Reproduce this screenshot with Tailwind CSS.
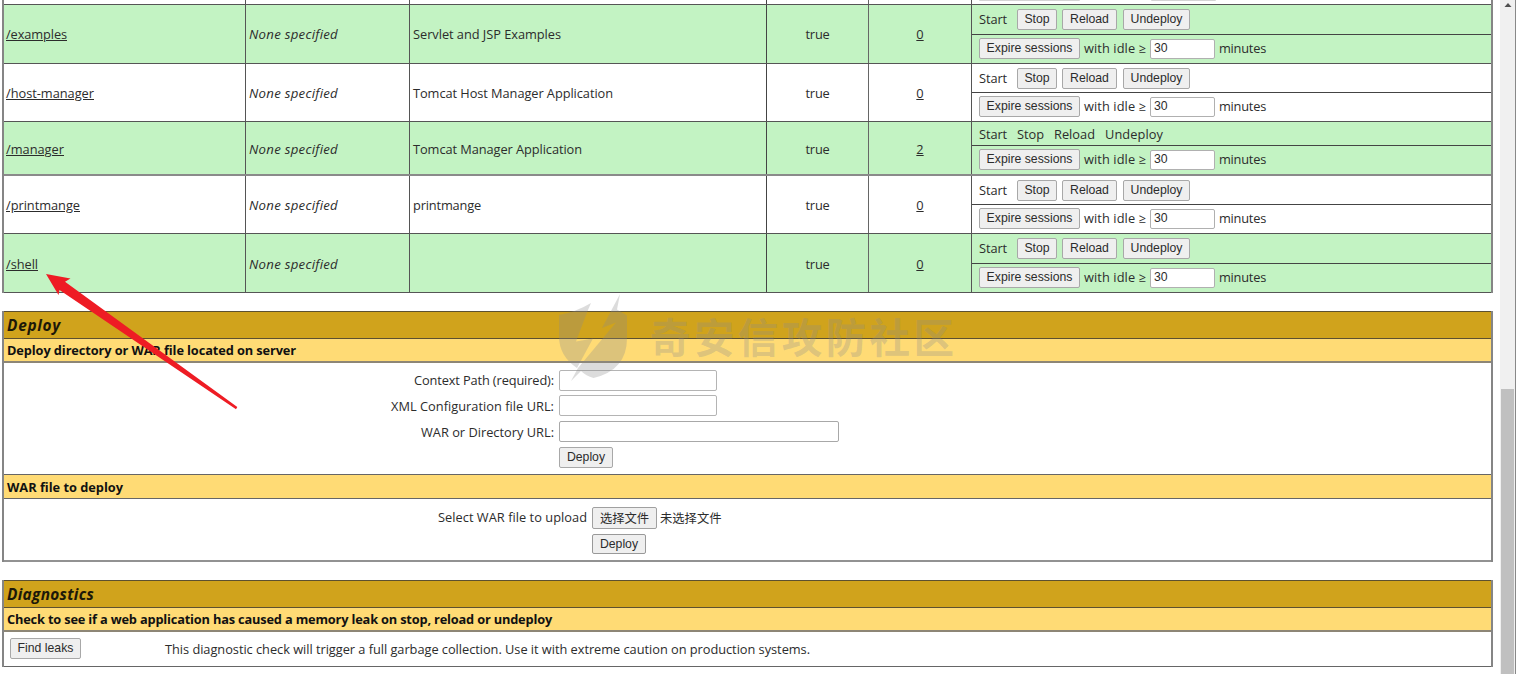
<!DOCTYPE html>
<html lang="en">
<head>
<meta charset="utf-8">
<title>/manager</title>
<script src="https://cdn.jsdelivr.net/npm/@tailwindcss/browser@4"></script>
</head>
<body class="relative h-[674px] w-[1516px] overflow-hidden bg-white font-['Open_Sans','Noto_Sans_CJK_SC',sans-serif] text-[12.8px] leading-[18px] text-[#2c2c2c]">
<div class="flex h-full justify-between">
<main class="w-[1491px] pl-[2px]">

  <!-- Applications -->
  <section id="apps" class="w-[1491px] border-x-2 border-[#858585]">
    <div class="grid h-[5px] grid-cols-[242px_164px_357px_102px_103px_519px] border-b border-[#555]">
      <div class="border-r border-[#555]"></div><div class="border-r border-[#555]"></div><div class="border-r border-[#444]"></div><div class="border-r border-[#666]"></div><div class="border-r border-[#555]"></div>
      <div class="flex gap-[71px] pl-[7px]"><div class="h-[1px] w-[101px] rounded-b-sm bg-[#d4d4d4]"></div><div class="h-[1px] w-[65px] rounded-b-sm bg-[#d4d4d4]"></div></div>
    </div>
  </section>

  <!-- Deploy -->
  <section class="mt-[18px] w-[1491px] border-x-2 border-[#858585]">
    <h2 class="flex h-[28px] items-center border-y border-[#5c5030] bg-[#d0a31c] pt-[2px] pl-[3px] text-[15.4px] font-bold text-[#1c1808] italic"><span data-w="54">Deploy</span></h2>
    <h3 class="flex h-[24px] items-center border-b-2 border-[#8d8676] bg-[#ffdb75] pl-[3px] font-bold text-[#111]"><span data-w="289">Deploy directory or WAR file located on server</span></h3>
    <div class="flex h-[111px] flex-col pt-[4px]">
      <div class="flex h-[26px] items-center"><label class="mr-[5px] flex w-[550px] justify-end"><span data-w="140">Context Path (required):</span></label><div class="h-[21px] w-[158px] rounded-[2px] border border-[#b4b4b4] bg-white"></div></div>
      <div class="flex h-[25px] items-center"><label class="mr-[5px] flex w-[550px] justify-end"><span data-w="163">XML Configuration file URL:</span></label><div class="h-[21px] w-[158px] rounded-[2px] border border-[#b4b4b4] bg-white"></div></div>
      <div class="flex h-[27px] items-center"><label class="mr-[5px] flex w-[550px] justify-end"><span data-w="133">WAR or Directory URL:</span></label><div class="h-[21px] w-[280px] rounded-[2px] border border-[#a8a8a8] bg-white"></div></div>
      <div class="flex h-[25px] items-center pl-[555px]"><button class="flex h-[21px] w-[54px] items-center justify-center rounded-[2px] border border-[#a8a8a8] bg-[#efefef] pb-px font-['Liberation_Sans',sans-serif] text-[12.25px]">Deploy</button></div>
    </div>
    <h3 class="flex h-[25px] items-center border-y border-[#666] bg-[#ffdb75] pt-px pl-[3px] font-bold text-[#111]"><span data-w="116">WAR file to deploy</span></h3>
    <div class="flex h-[63px] flex-col border-b-2 border-[#929292] pt-[6px]">
      <div class="flex h-[26px] items-center pl-[434px]"><span class="pb-[2px]" data-w="149">Select WAR file to upload</span>
        <button class="ml-[5px] flex h-[22px] w-[65px] items-center justify-center rounded-[2px] border border-[#a0a0a0] bg-[#efefef] pb-px font-['Noto_Sans_CJK_SC',sans-serif] text-[12.3px]">选择文件</button>
        <span class="ml-[3px] pb-px font-['Noto_Sans_CJK_SC',sans-serif] text-[12.3px]">未选择文件</span></div>
      <div class="flex h-[26px] items-center pl-[588px]"><button class="flex h-[20px] w-[54px] items-center justify-center rounded-[2px] border border-[#999] bg-[#efefef] font-['Liberation_Sans',sans-serif] text-[12.25px]">Deploy</button></div>
    </div>
  </section>

  <!-- Diagnostics -->
  <section class="mt-[18px] w-[1491px] border-x-2 border-[#858585]">
    <h2 class="flex h-[28px] items-center border-y border-[#5c5030] bg-[#d0a31c] pt-[2px] pl-[3px] text-[15.4px] font-bold text-[#1c1808] italic"><span data-w="87">Diagnostics</span></h2>
    <h3 class="flex h-[24px] items-center border-b-2 border-[#8d8676] bg-[#ffdb75] pl-[3px] font-bold text-[#111]"><span data-w="545">Check to see if a web application has caused a memory leak on stop, reload or undeploy</span></h3>
    <div class="flex h-[35px] items-center border-b border-[#666] pb-px pl-[6px]"><button class="flex h-[21px] w-[71px] items-center justify-center rounded-[2px] border border-[#a8a8a8] bg-[#efefef] pb-px font-['Liberation_Sans',sans-serif] text-[12.25px]">Find leaks</button><span class="ml-[84px]" data-w="645">This diagnostic check will trigger a full garbage collection. Use it with extreme caution on production systems.</span></div>
  </section>
</main>

<!-- Scrollbar -->
<aside class="flex h-full w-[16px] flex-col items-center border-r border-[#888] bg-[#f0f0f0]">
  <svg class="mt-[3px] h-[4px] w-[8px]" viewBox="0 0 8 4"><path d="M0.5 4 L4 0 L7.5 4 Z" fill="#505050"/></svg>
  <div class="mt-[382px] w-[13px] grow bg-[#c0c0c0]"></div>
</aside>
</div>

<!-- Watermark -->
<svg class="pointer-events-none absolute top-[290px] left-[550px] h-[100px] w-[420px]" viewBox="550 290 420 100">
  <g fill="#8b8b8b" fill-opacity=".3">
    <path d="M559 315 Q576 312 591 303 L588 310 L576 341.500 L593 338.500 L577 368 Q559 356 559 336 Z"/>
    <path d="M620 294 L617 309.500 L627 315.500 V338 Q627 370 593.500 378 Q586 376 581 371 L571 381 L578 368 L616 322.500 L602 328 L611 311 Z"/>
    <text x="650" y="353" font-family="Noto Sans CJK SC" font-size="40.500" font-weight="700" textLength="304" lengthAdjust="spacing">奇安信攻防社区</text>
  </g>
</svg>

<!-- Arrow pointing to /shell -->
<svg class="pointer-events-none absolute top-[270px] left-[40px] h-[142px] w-[202px]" viewBox="40 270 202 142">
  <path d="M46 274 L70.500 278.500 L65 281.700 L237.300 407 L236 409.300 L59.500 290 L58.500 295 Z" fill="#ee1c24"/>
</svg>

<script>
  const btn = (label, w) => `<button class="flex h-[21px] shrink-0 items-center justify-center rounded-[2px] border border-[#a8a8a8] bg-[#efefef] pb-px font-['Liberation_Sans',sans-serif] text-[12.25px]" style="width:${w}px">${label}</button>`;
  const rows = [
    ['/examples', 61, 'Servlet and JSP Examples', 148, 0, 59, 30],
    ['/host-manager', 88, 'Tomcat Host Manager Application', 200, 0, 58, 29],
    ['/manager', 58, 'Tomcat Manager Application', 169, 2, 54, 24],
    ['/printmange', 74, 'printmange', 68, 0, 58, 29],
    ['/shell', 32, '', 0, 0, 59, 30],
  ];
  const apps = document.getElementById('apps');
  rows.forEach(([path, pw, name, nw, n, h, top], i) => {
    const self = path === '/manager';
    const edge = self ? 'border-b-2 border-[#8a8a8a]' : 'border-b border-[#555]';
    const pad = self || path === '/shell' ? 'pt-[2px]' : 'pt-0';
    const actions = self
      ? `<div class="flex items-center gap-[10px] border-b border-[#444] pt-px pl-[7px]" style="height:${top}px"><span data-w="28">Start</span><span data-w="27">Stop</span><span data-w="41">Reload</span><span data-w="58">Undeploy</span></div>`
      : `<div class="flex items-center border-b border-[#444] pl-[7px]" style="height:${top}px"><span class="mr-[10px] pb-px" data-w="28">Start</span>${btn('Stop', 40)}<span class="w-[5px]"></span>${btn('Reload', 55)}<span class="w-[6px]"></span>${btn('Undeploy', 67)}</div>`;
    apps.insertAdjacentHTML('beforeend', `
    <div class="grid grid-cols-[242px_164px_357px_102px_103px_519px] ${edge} ${i % 2 ? 'bg-white' : 'bg-[#c3f3c3]'}" style="height:${h}px">
      <div class="flex items-center border-r border-[#555] ${pad} pl-[2px]"><a class="underline underline-offset-1" data-w="${pw}">${path}</a></div>
      <div class="flex items-center border-r border-[#555] ${pad} pl-[3px] text-[13.2px] italic"><span data-w="89">None specified</span></div>
      <div class="flex items-center border-r border-[#444] ${pad} pl-[3px]"><span data-w="${nw}">${name}</span></div>
      <div class="flex items-center justify-center border-r border-[#666] ${pad}"><span data-w="24">true</span></div>
      <div class="flex items-center justify-center border-r border-[#555] ${pad}"><a class="underline underline-offset-1">${n}</a></div>
      <div class="flex flex-col">${actions}
        <div class="flex grow items-center pb-px pl-[7px]">${btn('Expire sessions', 101)}<span class="mr-[4px] ml-[4px] pb-px" data-w="62">with idle ≥</span><div class="flex h-[20px] w-[65px] items-center rounded-[2px] border border-[#b0b0b0] bg-white pb-px pl-[3px] font-['Liberation_Sans',sans-serif] text-[12.25px]">30</div><span class="ml-[4px] pb-px" data-w="47">minutes</span></div>
      </div>
    </div>`);
  });
  function fit() {
    document.querySelectorAll('[data-w]').forEach(el => {
      const n = el.textContent.length, w = Number(el.dataset.w);
      el.style.whiteSpace = 'nowrap';
      el.style.flexShrink = 0;
      el.style.letterSpacing = '0px';
      if (n) el.style.letterSpacing = ((w - el.getBoundingClientRect().width) / n) + 'px';
    });
  }
  fit();
  window.addEventListener('load', fit);
  document.fonts.ready.then(fit);
</script>
</body>
</html>
